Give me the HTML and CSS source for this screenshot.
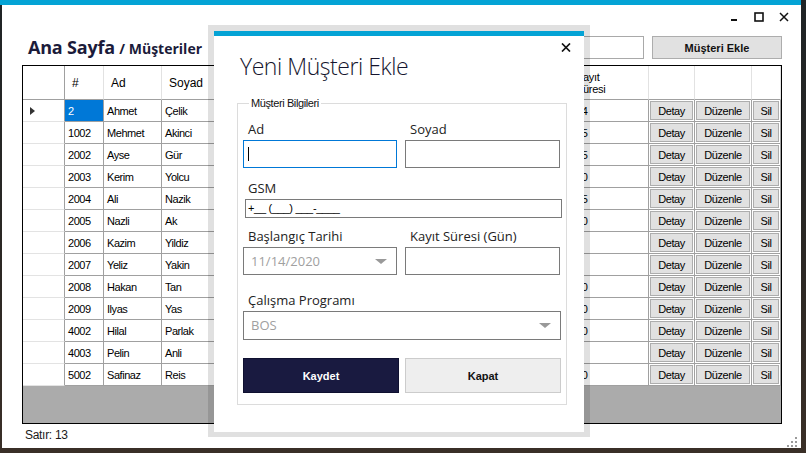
FILE: index.html
```html
<!DOCTYPE html>
<html lang="tr">
<head>
<meta charset="utf-8">
<title>Ana Sayfa / Müşteriler</title>
<link rel="stylesheet" href="styles.css">
</head>
<body>
<div class="window">
  <div class="topbar"></div>
  <div class="window-body">
    <div class="controls">
      <svg class="ctl" width="10" height="10" viewBox="0 0 10 10"><rect x="2" y="7" width="6" height="2" fill="#111"/></svg>
      <svg class="ctl" width="10" height="10" viewBox="0 0 10 10"><rect x="1" y="1" width="8" height="8" fill="none" stroke="#111" stroke-width="1.6"/></svg>
      <svg class="ctl" width="10" height="10" viewBox="0 0 10 10"><path d="M1 1 L9 9 M9 1 L1 9" stroke="#111" stroke-width="1.5"/></svg>
    </div>
    <div class="header">
      <h1 class="title">Ana Sayfa <span class="subtitle">/ Müşteriler</span></h1>
      <div class="header-actions">
        <div class="search"></div>
        <button class="btn-add">Müşteri Ekle</button>
      </div>
    </div>
    <div class="grid">
      <table class="table">
        <colgroup>
          <col class="c-rh"><col class="c-id"><col class="c-ad"><col class="c-soyad"><col class="c-gsm"><col class="c-tarih"><col class="c-kayit"><col class="c-detay"><col class="c-duzenle"><col class="c-sil">
        </colgroup>
        <thead>
          <tr>
            <th class="rh"></th><th>#</th><th>Ad</th><th>Soyad</th><th></th><th></th><th class="two">Kayıt<br>Süresi</th><th></th><th></th><th class="last"></th>
          </tr>
        </thead>
        <tbody>
          <tr><td class="rh"><span class="arrow"></span></td><td class="sel">2</td><td>Ahmet</td><td>Çelik</td><td></td><td></td><td>14</td><td class="b"><span class="cbtn">Detay</span></td><td class="b"><span class="cbtn">Düzenle</span></td><td class="b last"><span class="cbtn">Sil</span></td></tr>
          <tr><td class="rh"></td><td>1002</td><td>Mehmet</td><td>Akinci</td><td></td><td></td><td>15</td><td class="b"><span class="cbtn">Detay</span></td><td class="b"><span class="cbtn">Düzenle</span></td><td class="b last"><span class="cbtn">Sil</span></td></tr>
          <tr><td class="rh"></td><td>2002</td><td>Ayse</td><td>Gür</td><td></td><td></td><td>15</td><td class="b"><span class="cbtn">Detay</span></td><td class="b"><span class="cbtn">Düzenle</span></td><td class="b last"><span class="cbtn">Sil</span></td></tr>
          <tr><td class="rh"></td><td>2003</td><td>Kerim</td><td>Yolcu</td><td></td><td></td><td>30</td><td class="b"><span class="cbtn">Detay</span></td><td class="b"><span class="cbtn">Düzenle</span></td><td class="b last"><span class="cbtn">Sil</span></td></tr>
          <tr><td class="rh"></td><td>2004</td><td>Ali</td><td>Nazik</td><td></td><td></td><td>15</td><td class="b"><span class="cbtn">Detay</span></td><td class="b"><span class="cbtn">Düzenle</span></td><td class="b last"><span class="cbtn">Sil</span></td></tr>
          <tr><td class="rh"></td><td>2005</td><td>Nazli</td><td>Ak</td><td></td><td></td><td>30</td><td class="b"><span class="cbtn">Detay</span></td><td class="b"><span class="cbtn">Düzenle</span></td><td class="b last"><span class="cbtn">Sil</span></td></tr>
          <tr><td class="rh"></td><td>2006</td><td>Kazim</td><td>Yildiz</td><td></td><td></td><td></td><td class="b"><span class="cbtn">Detay</span></td><td class="b"><span class="cbtn">Düzenle</span></td><td class="b last"><span class="cbtn">Sil</span></td></tr>
          <tr><td class="rh"></td><td>2007</td><td>Yeliz</td><td>Yakin</td><td></td><td></td><td></td><td class="b"><span class="cbtn">Detay</span></td><td class="b"><span class="cbtn">Düzenle</span></td><td class="b last"><span class="cbtn">Sil</span></td></tr>
          <tr><td class="rh"></td><td>2008</td><td>Hakan</td><td>Tan</td><td></td><td></td><td>30</td><td class="b"><span class="cbtn">Detay</span></td><td class="b"><span class="cbtn">Düzenle</span></td><td class="b last"><span class="cbtn">Sil</span></td></tr>
          <tr><td class="rh"></td><td>2009</td><td>Ilyas</td><td>Yas</td><td></td><td></td><td>30</td><td class="b"><span class="cbtn">Detay</span></td><td class="b"><span class="cbtn">Düzenle</span></td><td class="b last"><span class="cbtn">Sil</span></td></tr>
          <tr><td class="rh"></td><td>4002</td><td>Hilal</td><td>Parlak</td><td></td><td></td><td>30</td><td class="b"><span class="cbtn">Detay</span></td><td class="b"><span class="cbtn">Düzenle</span></td><td class="b last"><span class="cbtn">Sil</span></td></tr>
          <tr><td class="rh"></td><td>4003</td><td>Pelin</td><td>Anli</td><td></td><td></td><td></td><td class="b"><span class="cbtn">Detay</span></td><td class="b"><span class="cbtn">Düzenle</span></td><td class="b last"><span class="cbtn">Sil</span></td></tr>
          <tr><td class="rh"></td><td>5002</td><td>Safinaz</td><td>Reis</td><td></td><td></td><td>30</td><td class="b"><span class="cbtn">Detay</span></td><td class="b"><span class="cbtn">Düzenle</span></td><td class="b last"><span class="cbtn">Sil</span></td></tr>
        </tbody>
      </table>
    </div>
    <div class="status">
      <span>Satır: 13</span>
      <svg class="grip" width="11" height="11" viewBox="0 0 11 11" fill="#9a9a9a">
        <rect x="8" y="0" width="2" height="2"/>
        <rect x="4" y="4" width="2" height="2"/><rect x="8" y="4" width="2" height="2"/>
        <rect x="0" y="8" width="2" height="2"/><rect x="4" y="8" width="2" height="2"/><rect x="8" y="8" width="2" height="2"/>
      </svg>
    </div>
  </div>
</div>

<div class="dialog">
  <div class="dialog-panel">
    <div class="dlg-head">
      <h2 class="dlg-title">Yeni Müşteri Ekle</h2>
      <svg class="dlg-close" width="10" height="9" viewBox="0 0 10 9"><path d="M1 0.5 L9 8.5 M9 0.5 L1 8.5" stroke="#111" stroke-width="1.7"/></svg>
    </div>
    <fieldset class="group">
      <legend>Müşteri Bilgileri</legend>
      <div class="form">
        <div class="field">
          <label>Ad</label>
          <div class="input focus"><span class="caret"></span></div>
        </div>
        <div class="field">
          <label>Soyad</label>
          <div class="input"></div>
        </div>
        <div class="field wide gsm">
          <label>GSM</label>
          <div class="input masked">+__ (___) ___-____</div>
        </div>
        <div class="field r3">
          <label>Başlangıç Tarihi</label>
          <div class="input select">11/14/2020<span class="tri"></span></div>
        </div>
        <div class="field r3">
          <label>Kayıt Süresi (Gün)</label>
          <div class="input"></div>
        </div>
        <div class="field wide r4">
          <label>Çalışma Programı</label>
          <div class="input select combo">BOS<span class="tri"></span></div>
        </div>
        <div class="actions">
          <button class="btn-save">Kaydet</button>
          <button class="btn-close">Kapat</button>
        </div>
      </div>
    </fieldset>
  </div>
</div>
</body>
</html>
```
FILE: styles.css
```css
* { box-sizing: border-box; }
html, body { margin: 0; padding: 0; }
body {
  width: 806px;
  height: 453px;
  overflow: hidden;
  background: linear-gradient(180deg, #1f2426 0%, #2c2824 60%, #3a2f27 100%);
  font-family: "Liberation Sans", Arial, sans-serif;
  position: relative;
}

.window {
  width: 801px;
  height: 448px;
  display: flex;
  flex-direction: column;
}
.topbar { height: 5px; background: #04a3d5; flex: none; }
.window-body {
  flex: 1;
  margin-left: 2px;
  background: #fff;
  padding: 0 19px 0 20px;
  display: flex;
  flex-direction: column;
}

.controls {
  height: 26px;
  display: flex;
  justify-content: flex-end;
  align-items: flex-start;
  padding-top: 7px;
  gap: 15px;
  margin-right: -7px;
}
.ctl { display: block; }

.header {
  height: 23px;
  margin-top: 5px;
  display: flex;
  justify-content: space-between;
}
.title {
  margin: -1px 0 0 6px;
  font-family: "Open Sans", sans-serif;
  font-weight: 700;
  font-size: 18px;
  line-height: 24px;
  color: #1b1b3a;
  letter-spacing: -0.2px;
}
.subtitle { font-size: 14px; letter-spacing: 0; }
.header-actions { display: flex; gap: 8px; }
.search { width: 174px; height: 23px; border: 1px solid #a9a9a9; background: #fff; }
.btn-add {
  width: 130px; height: 23px;
  background: #e1e1e1; border: 1px solid #adadad;
  font-family: "Liberation Sans", Arial, sans-serif;
  font-weight: 700; font-size: 11px; color: #111;
  padding: 0;
}

.grid {
  margin-top: 6px;
  height: 359px;
  border: 1px solid #000;
  background: #ababab;
  flex: none;
}
.table {
  border-collapse: separate;
  border-spacing: 0;
  table-layout: fixed;
  width: 758px;
  background: #fff;
  font-size: 11px;
  letter-spacing: -0.45px;
  color: #000;
}
.c-rh { width: 42px; } .c-id { width: 39px; } .c-ad { width: 58px; } .c-soyad { width: 89px; }
.c-gsm { width: 110px; } .c-tarih { width: 212px; } .c-kayit { width: 76px; }
.c-detay { width: 46px; } .c-duzenle { width: 57px; } .c-sil { width: 29px; }

.table th {
  height: 34px;
  padding: 0 0 0 7px;
  text-align: left;
  font-weight: 400;
  font-size: 12px;
  letter-spacing: 0;
  border-right: 1px solid #e2e2e2;
  border-bottom: 1px solid #a0a0a0;
  white-space: nowrap;
  overflow: hidden;
}
.table th.two { font-size: 11px; line-height: 12px; letter-spacing: -0.3px; padding-left: 3px; }
.table th.rh { border-right: 1px solid #a0a0a0; }
.table td {
  height: 22px;
  padding: 0 0 0 3px;
  border-right: 1px solid #a0a0a0;
  border-bottom: 1px solid #a0a0a0;
  white-space: nowrap;
  overflow: hidden;
  vertical-align: middle;
}
.table td.rh { border-bottom-color: #e3e3e3; }
.table td.sel { background: #0078d7; color: #fff; }
.arrow {
  display: block;
  width: 0; height: 0;
  margin-left: 4px;
  border-left: 5px solid #333;
  border-top: 4px solid transparent;
  border-bottom: 4px solid transparent;
}
.table td.b { padding: 1px; }
.cbtn {
  display: flex;
  align-items: center;
  justify-content: center;
  height: 19px;
  background: #e1e1e1;
  border: 1px solid #adadad;
  letter-spacing: -0.4px;
}

.status {
  margin-top: 4px;
  display: flex;
  justify-content: space-between;
  align-items: flex-start;
  font-size: 12px;
  line-height: 14px;
  color: #1a1a1a;
  padding-left: 3px;
  letter-spacing: -0.3px;
}
.grip { display: block; margin: 9px -16px 0 0; }

/* dialog */
.dialog {
  position: absolute;
  left: 208px;
  top: 25px;
  width: 382px;
  height: 412px;
  padding: 6px 6px 5px 6px;
  background: rgba(0, 0, 0, 0.12);
}
.dialog-panel {
  height: 100%;
  background: #fff;
  border-top: 5px solid #04a3d5;
}
.dlg-head {
  display: flex;
  justify-content: space-between;
  align-items: flex-start;
  padding: 7px 13px 0 26px;
}
.dlg-title {
  margin: 8px 0 0 0;
  font-family: "Open Sans", sans-serif;
  font-weight: 300;
  font-size: 23px;
  line-height: 31px;
  letter-spacing: -0.45px;
  color: #15152e;
}
.dlg-close { display: block; }

.group {
  margin: 15px 17px 0 23px;
  padding: 10px 5px 11px 5px;
  border: 1px solid #dcdcdc;
  min-width: 0;
}
.group legend {
  margin-left: 6px;
  padding: 0 2px;
  font-size: 11px;
  line-height: 13px;
  letter-spacing: -0.4px;
  color: #111;
}
.form {
  display: grid;
  grid-template-columns: 154px 155px;
  column-gap: 8px;
}
.field label {
  display: block;
  font-family: "Open Sans", sans-serif;
  font-size: 13px;
  line-height: 18px;
  padding-left: 5px;
  margin-bottom: 2px;
  color: #222;
}
.field.wide { grid-column: 1 / 3; }
.field.gsm { margin-top: 11px; }
.field.r3 { margin-top: 9px; }
.field.r4 { margin-top: 16px; }
.input {
  height: 28px;
  border: 1px solid #7a7a7a;
  background: #fff;
  position: relative;
}
.input.focus { border-color: #0078d7; }
.caret {
  position: absolute;
  left: 4px; top: 6px;
  width: 1px; height: 14px;
  background: #000;
}
.input.masked {
  height: 19px;
  margin: 0 -2px 0 2px;
  font-size: 11px;
  line-height: 17px;
  padding-left: 2px;
  letter-spacing: -0.3px;
  color: #000;
}
.input.select {
  font-family: "Open Sans", sans-serif;
  font-size: 13px;
  line-height: 26px;
  padding-left: 7px;
  color: #a0a0a0;
}
.input.combo { height: 29px; line-height: 27px; margin-right: -1px; }
.tri {
  position: absolute;
  right: 9px;
  top: 11px;
  width: 0; height: 0;
  border-top: 5px solid #999;
  border-left: 6px solid transparent;
  border-right: 6px solid transparent;
}
.actions {
  grid-column: 1 / 3;
  margin-top: 18px;
  display: grid;
  grid-template-columns: 156px 156px;
  column-gap: 6px;
}
.btn-save, .btn-close {
  height: 35px;
  padding: 0;
  font-family: "Liberation Sans", Arial, sans-serif;
  font-weight: 700;
  font-size: 11px;
}
.btn-save { background: #191a40; border: 1px solid #0f1030; color: #fff; }
.btn-close { background: #eeeeee; border: 1px solid #cccccc; color: #111; }
```
